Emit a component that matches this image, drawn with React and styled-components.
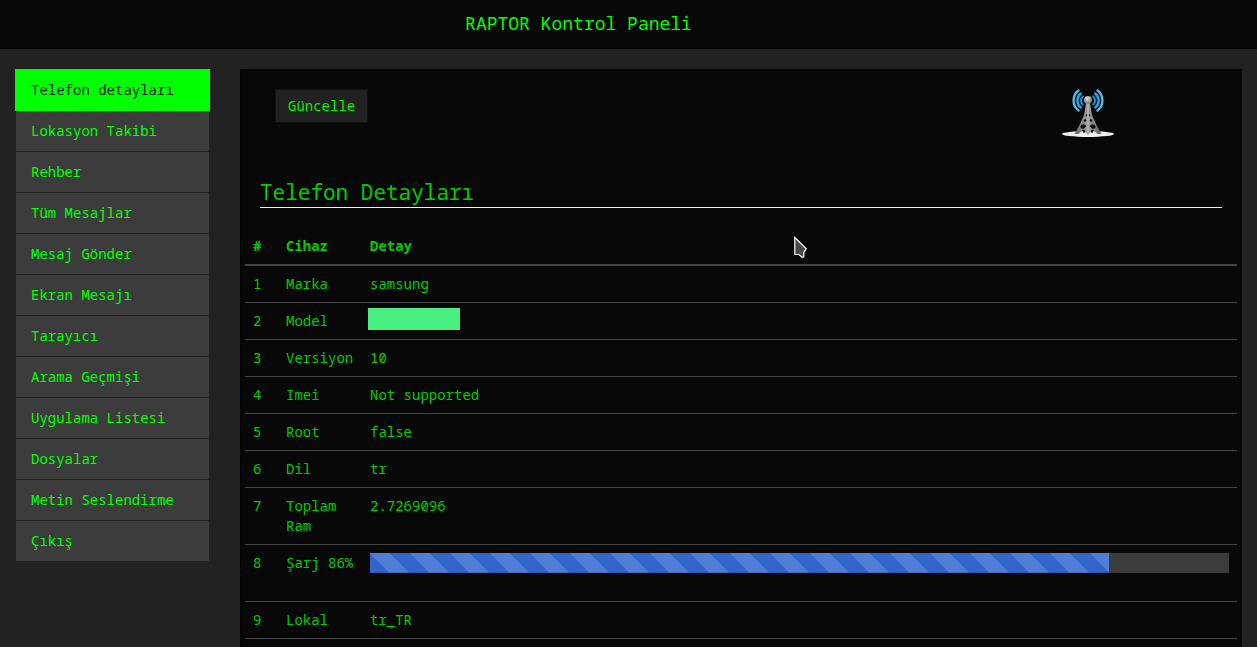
import React from "react";
import styled, { createGlobalStyle } from "styled-components";

const GlobalStyle = createGlobalStyle`
  *, *::before, *::after { box-sizing: border-box; }
  body {
    margin: 0;
    background: #222;
    color: #00cc00;
    font-family: "Noto Sans Mono", "Droid Sans Mono", "DejaVu Sans Mono", monospace;
    font-size: 14px;
    line-height: 20px;
  }
`;

const Page = styled.div`
  display: flex;
  flex-direction: column;
  min-height: 100vh;
`;

const Header = styled.header`
  display: flex;
  justify-content: center;
  padding: 13px 100px 15px 0;
  background: #080808;
  border-bottom: 1px solid #000;
`;

const Brand = styled.a`
  color: #00ff00;
  font-size: 18px;
  text-decoration: none;
`;

const Main = styled.div`
  display: grid;
  grid-template-columns: 195px minmax(0, 1fr);
  gap: 30px;
  flex: 1;
  padding: 20px 15px 0;
`;

const Menu = styled.nav`
  display: flex;
  flex-direction: column;
`;

const MenuItem = styled.a`
  position: relative;
  z-index: ${(p) => (p.$active ? 1 : 0)};
  margin-bottom: -1px;
  padding: 10px 15px;
  border: 1px solid ${(p) => (p.$active ? "#00ff00" : "#222")};
  background: ${(p) => (p.$active ? "#00ff00" : "#3c3c3c")};
  color: ${(p) => (p.$active ? "#222" : "#00ff00")};
  text-decoration: none;
`;

const Panel = styled.main`
  padding: 19px 4px 0;
  background: #080808;
  border: 1px solid #000;
  border-bottom: 0;
`;

const Toolbar = styled.div`
  display: flex;
  justify-content: space-between;
  align-items: flex-start;
  padding: 0 123px 0 30px;
`;

const UpdateButton = styled.button`
  padding: 6px 12px;
  border: 1px solid #121212;
  background: #222;
  color: #00f000;
  font: inherit;
  cursor: pointer;
`;

const Antenna = styled.svg`
  display: block;
  width: 52px;
  height: 48px;
`;

const Heading = styled.h1`
  margin: 40px 15px 20px;
  border-bottom: 1px solid #eee;
  font-size: 21px;
  font-weight: 400;
  line-height: 30px;
`;

const Table = styled.table`
  width: 100%;
  table-layout: fixed;
  border-collapse: separate;
  border-spacing: 0;
`;

const Column = styled.col`
  width: ${(p) => p.$width};
`;

const HeadCell = styled.th`
  padding: 8px;
  border-bottom: 2px solid #444;
  text-align: left;
`;

const Cell = styled.td`
  padding: 8px;
  border-bottom: 1px solid #444;
  vertical-align: top;
`;

const Redaction = styled.div`
  width: 92px;
  height: 22px;
  margin: -3px -2px 1px;
  background: #48ef80;
`;

const Progress = styled.div`
  height: 20px;
  margin-bottom: 20px;
  background: #3c3c3c;
`;

const ProgressBar = styled.div`
  height: 100%;
  background-color: #3366cc;
  background-image: linear-gradient(
    45deg,
    rgba(255, 255, 255, 0.15) 25%,
    transparent 25%,
    transparent 50%,
    rgba(255, 255, 255, 0.15) 50%,
    rgba(255, 255, 255, 0.15) 75%,
    transparent 75%
  );
  background-size: 40px 40px;
  box-shadow: inset 0 -1px 0 rgba(0, 0, 0, 0.15);
`;

const Pointer = styled.svg`
  position: absolute;
  left: 794px;
  top: 236px;
  width: 14px;
  height: 23px;
  pointer-events: none;
`;

const menu = [
  "Telefon detayları",
  "Lokasyon Takibi",
  "Rehber",
  "Tüm Mesajlar",
  "Mesaj Gönder",
  "Ekran Mesajı",
  "Tarayıcı",
  "Arama Geçmişi",
  "Uygulama Listesi",
  "Dosyalar",
  "Metin Seslendirme",
  "Çıkış",
];

const charge = 86;

const rows = [
  ["Marka", "samsung"],
  ["Model", <Redaction />],
  ["Versiyon", "10"],
  ["Imei", "Not supported"],
  ["Root", "false"],
  ["Dil", "tr"],
  ["Toplam Ram", "2.7269096"],
  [
    `Şarj ${charge}%`,
    <Progress role="progressbar" aria-label="Şarj" aria-valuenow={charge} aria-valuemin={0} aria-valuemax={100}>
      <ProgressBar style={{ width: `${charge}%` }} />
    </Progress>,
  ],
  ["Lokal", "tr_TR"],
];

function AntennaIcon() {
  return (
    <Antenna viewBox="0 0 52 48" aria-hidden="true">
      <defs>
        <linearGradient id="metal" x1="0" x2="1">
          <stop offset="0" stopColor="#666" />
          <stop offset="0.5" stopColor="#a0a0a0" />
          <stop offset="1" stopColor="#5c5c5c" />
        </linearGradient>
        <radialGradient id="ball" cx="0.4" cy="0.3" r="0.7">
          <stop offset="0" stopColor="#ddd" />
          <stop offset="1" stopColor="#777" />
        </radialGradient>
      </defs>
      <ellipse cx="26" cy="45" rx="26" ry="3" fill="#eee" />
      <path d="M24 14h4l2 12 4.500 10 5 9h-4l-5-4.500-4.500 5.500-4.500-5.500-5 4.500h-4l5-9 4.500-10z" fill="url(#metal)" />
      <path
        d="M23.500 26l1.500-1v3zM28.500 26l-1.500-1v3zM21.500 31l2-1 1 2-2 1zM30.500 31l-2-1-1 2 2 1zM18.500 37l3-2 3 2-3 3-3-1zM33.500 37l-3-2-3 2 3 3 3-1zM20.500 42l2-1 1 2-2 1zM31.500 42l-2-1-1 2 2 1z"
        fill="#111"
      />
      <path d="M26 14v32" stroke="#bbb" strokeWidth="1" />
      <circle cx="26" cy="11" r="4" fill="url(#ball)" />
      <g fill="none" strokeLinecap="round">
        <path d="M16.500 1.500C10 6 10 17 16.500 21.500M35.500 1.500c6.500 4.500 6.500 15.500 0 20" stroke="#55b8e6" strokeWidth="2.400" />
        <path d="M18.700 4.500c-4.500 4-4.500 10 0 14M33.300 4.500c4.500 4 4.500 10 0 14" stroke="#2ea2dc" strokeWidth="2.400" />
        <path d="M20.800 7.500c-2.600 2.500-2.600 5.500 0 8M31.200 7.500c2.600 2.500 2.600 5.500 0 8" stroke="#128ed0" strokeWidth="2.200" />
      </g>
    </Antenna>
  );
}

export default function App() {
  return (
    <>
      <GlobalStyle />
      <Page>
        <Header>
          <Brand href="#">RAPTOR Kontrol Paneli</Brand>
        </Header>
        <Main>
          <Menu>
            {menu.map((label, i) => (
              <MenuItem key={label} href="#" $active={i === 0}>
                {label}
              </MenuItem>
            ))}
          </Menu>
          <Panel>
            <Toolbar>
              <UpdateButton type="button">Güncelle</UpdateButton>
              <AntennaIcon />
            </Toolbar>
            <Heading>Telefon Detayları</Heading>
            <Table>
              <colgroup>
                <Column $width="33px" />
                <Column $width="84px" />
                <Column $width="auto" />
              </colgroup>
              <thead>
                <tr>
                  <HeadCell scope="col">#</HeadCell>
                  <HeadCell scope="col">Cihaz</HeadCell>
                  <HeadCell scope="col">Detay</HeadCell>
                </tr>
              </thead>
              <tbody>
                {rows.map(([name, value], i) => (
                  <tr key={name}>
                    <Cell>{i + 1}</Cell>
                    <Cell>{name}</Cell>
                    <Cell>{value}</Cell>
                  </tr>
                ))}
              </tbody>
            </Table>
          </Panel>
        </Main>
      </Page>
      <Pointer viewBox="0 0 14 23" aria-hidden="true">
        <path d="M.8 1.500v17h4l3.500 2.800 1.500-.5v-4.500l2.500-3.500z" fill="#4a4a4a" stroke="#fff" strokeWidth="1.200" />
      </Pointer>
    </>
  );
}
